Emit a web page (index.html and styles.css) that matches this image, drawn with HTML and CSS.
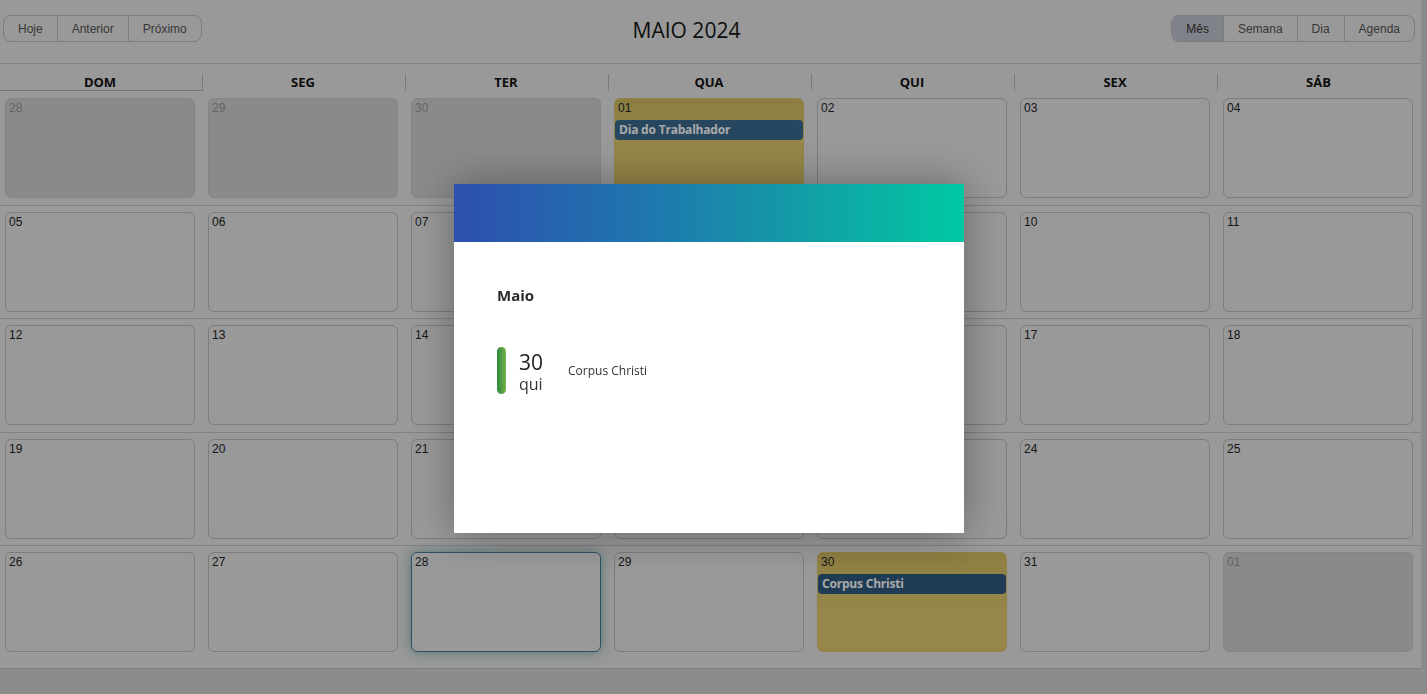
FILE: index.html
```html
<!DOCTYPE html>
<html lang="pt-BR">
<head>
<meta charset="utf-8">
<title>Calendário</title>
<link rel="stylesheet" href="styles.css">
</head>
<body>
<div class="calendar">
  <div class="toolbar">
    <div class="btn-group">
      <button class="btn">Hoje</button>
      <button class="btn">Anterior</button>
      <button class="btn">Próximo</button>
    </div>
    <div class="title">MAIO 2024</div>
    <div class="btn-group">
      <button class="btn active">Mês</button>
      <button class="btn">Semana</button>
      <button class="btn">Dia</button>
      <button class="btn">Agenda</button>
    </div>
  </div>
  <div class="weekdays">
    <div class="wd first">DOM</div>
    <div class="wd">SEG</div>
    <div class="wd">TER</div>
    <div class="wd">QUA</div>
    <div class="wd">QUI</div>
    <div class="wd">SEX</div>
    <div class="wd">SÁB</div>
  </div>
  <div class="week">
    <div class="slot"><div class="day off"><span class="num">28</span></div></div>
    <div class="slot"><div class="day off"><span class="num">29</span></div></div>
    <div class="slot"><div class="day off"><span class="num">30</span></div></div>
    <div class="slot"><div class="day holiday"><span class="num">01</span><div class="event">Dia do Trabalhador</div></div></div>
    <div class="slot"><div class="day"><span class="num">02</span></div></div>
    <div class="slot"><div class="day"><span class="num">03</span></div></div>
    <div class="slot"><div class="day"><span class="num">04</span></div></div>
  </div>
  <div class="week">
    <div class="slot"><div class="day"><span class="num">05</span></div></div>
    <div class="slot"><div class="day"><span class="num">06</span></div></div>
    <div class="slot"><div class="day"><span class="num">07</span></div></div>
    <div class="slot"><div class="day"><span class="num">08</span></div></div>
    <div class="slot"><div class="day"><span class="num">09</span></div></div>
    <div class="slot"><div class="day"><span class="num">10</span></div></div>
    <div class="slot"><div class="day"><span class="num">11</span></div></div>
  </div>
  <div class="week">
    <div class="slot"><div class="day"><span class="num">12</span></div></div>
    <div class="slot"><div class="day"><span class="num">13</span></div></div>
    <div class="slot"><div class="day"><span class="num">14</span></div></div>
    <div class="slot"><div class="day"><span class="num">15</span></div></div>
    <div class="slot"><div class="day"><span class="num">16</span></div></div>
    <div class="slot"><div class="day"><span class="num">17</span></div></div>
    <div class="slot"><div class="day"><span class="num">18</span></div></div>
  </div>
  <div class="week">
    <div class="slot"><div class="day"><span class="num">19</span></div></div>
    <div class="slot"><div class="day"><span class="num">20</span></div></div>
    <div class="slot"><div class="day"><span class="num">21</span></div></div>
    <div class="slot"><div class="day"><span class="num">22</span></div></div>
    <div class="slot"><div class="day"><span class="num">23</span></div></div>
    <div class="slot"><div class="day"><span class="num">24</span></div></div>
    <div class="slot"><div class="day"><span class="num">25</span></div></div>
  </div>
  <div class="week">
    <div class="slot"><div class="day"><span class="num">26</span></div></div>
    <div class="slot"><div class="day"><span class="num">27</span></div></div>
    <div class="slot"><div class="day today"><span class="num">28</span></div></div>
    <div class="slot"><div class="day"><span class="num">29</span></div></div>
    <div class="slot"><div class="day holiday"><span class="num">30</span><div class="event dark">Corpus Christi</div></div></div>
    <div class="slot"><div class="day"><span class="num">31</span></div></div>
    <div class="slot"><div class="day off"><span class="num">01</span></div></div>
  </div>
</div>

<div class="overlay"></div>
<div class="modal">
  <div class="modal-head"></div>
  <div class="modal-body">
    <div class="month">Maio</div>
    <div class="item">
      <div class="bar"></div>
      <div class="date">
        <div class="d">30</div>
        <div class="w">qui</div>
      </div>
      <div class="name">Corpus Christi</div>
    </div>
  </div>
</div>
</body>
</html>
```

FILE: styles.css
```css
* { box-sizing: border-box; }
html, body { margin: 0; padding: 0; }
body {
  background: #c9c9c9;
  font-family: "Liberation Sans", Arial, sans-serif;
  width: 1427px;
  height: 694px;
  overflow: hidden;
}
.calendar {
  width: 1421px;
  background: #dbdbdb;
  border-bottom: 1px solid #b9b9b9;
  padding-bottom: 9px;
}
.toolbar {
  height: 64px;
  display: flex;
  justify-content: space-between;
  align-items: flex-start;
  padding: 15px 6px 0 3px;
  border-bottom: 1px solid #bababa;
}
.btn-group {
  display: flex;
  border: 1px solid #b2b2b2;
  border-radius: 8px;
  overflow: hidden;
  height: 27px;
}
.btn {
  font-family: "Liberation Sans", Arial, sans-serif;
  font-size: 12px;
  color: #505050;
  background: transparent;
  border: none;
  border-left: 1px solid #b2b2b2;
  padding: 0 14px;
  height: 100%;
  margin: 0;
}
.btn:first-child { border-left: none; }
.btn.active { background: #b6bac4; color: #333; }
.title {
  font-family: "Open Sans", "Noto Sans", sans-serif;
  font-size: 21px;
  color: #151515;
  line-height: 30px;
}
.weekdays {
  display: grid;
  grid-template-columns: repeat(7, 203px);
  height: 27px;
}
.wd {
  align-self: end;
  height: 17px;
  line-height: 17px;
  text-align: center;
  font-family: "Open Sans", "Noto Sans", sans-serif;
  font-weight: 700;
  font-size: 13px;
  color: #111;
  border-right: 1px solid #b0b0b0;
  padding-right: 2px;
}
.wd:last-child { border-right: none; }
.wd.first { border-bottom: 1px solid #a9a9a9; }
.week {
  display: grid;
  grid-template-columns: repeat(7, 203px);
  border-top: 1px solid #bababa;
  padding: 6px 0 6.5px;
}
.weekdays + .week { border-top-color: transparent; }
.slot { padding-left: 5px; }
.day {
  width: 190px;
  height: 100px;
  border: 1px solid #b2b2b2;
  border-radius: 6px;
  padding: 2px 0 0 0;
}
.num {
  display: block;
  font-size: 12px;
  line-height: 14px;
  color: #222;
  padding-left: 3px;
}
.day.off { background: #c6c6c6; border-color: #bdbdbd; }
.day.off .num { color: #909090; }
.day.holiday {
  background: linear-gradient(to bottom, #c9b35c 0%, #d6c167 35%, #d7c268 100%);
  border-color: #d0bc66;
}
.event {
  margin-top: 5px;
  height: 20px;
  border-radius: 4px;
  background: #38668b;
  color: #f2f2f2;
  font-family: "Open Sans", "Noto Sans", sans-serif;
  font-weight: 700;
  font-size: 12px;
  line-height: 20px;
  padding-left: 4px;
  letter-spacing: -0.2px;
}
.event.dark { background: #2d5679; }
.day.today {
  border-color: #3d7591;
  box-shadow: 0 0 12px rgba(30, 110, 110, 0.5);
}
.overlay {
  position: fixed;
  inset: 0;
  background: rgba(0, 0, 0, 0.3);
}
.modal {
  position: fixed;
  left: 454px;
  top: 184px;
  width: 510px;
  height: 349px;
  background: #fff;
  box-shadow: 0 0 40px rgba(0, 0, 0, 0.35);
  font-family: "Open Sans", "Noto Sans", sans-serif;
}
.modal-head {
  height: 58px;
  background: linear-gradient(90deg, #2d4fae 0%, #1e79ae 40%, #12a0a6 70%, #00c9a3 100%);
}
.modal-body { padding: 43px 0 0 43px; }
.month {
  font-size: 15px;
  font-weight: 700;
  color: #2a2a2a;
  line-height: 20px;
}
.item {
  display: flex;
  align-items: flex-start;
  margin-top: 42px;
}
.bar {
  width: 9px;
  height: 47px;
  border-radius: 5px;
  background: linear-gradient(90deg, #2e8a3f, #74b14a);
}
.date { margin-left: 13px; width: 49px; padding-top: 3px; }
.date .d { font-size: 21px; line-height: 24px; color: #222; }
.date .w { font-size: 16px; line-height: 20px; color: #333; }
.name { font-size: 12px; color: #333; line-height: 16px; margin-top: 16px; }
```
